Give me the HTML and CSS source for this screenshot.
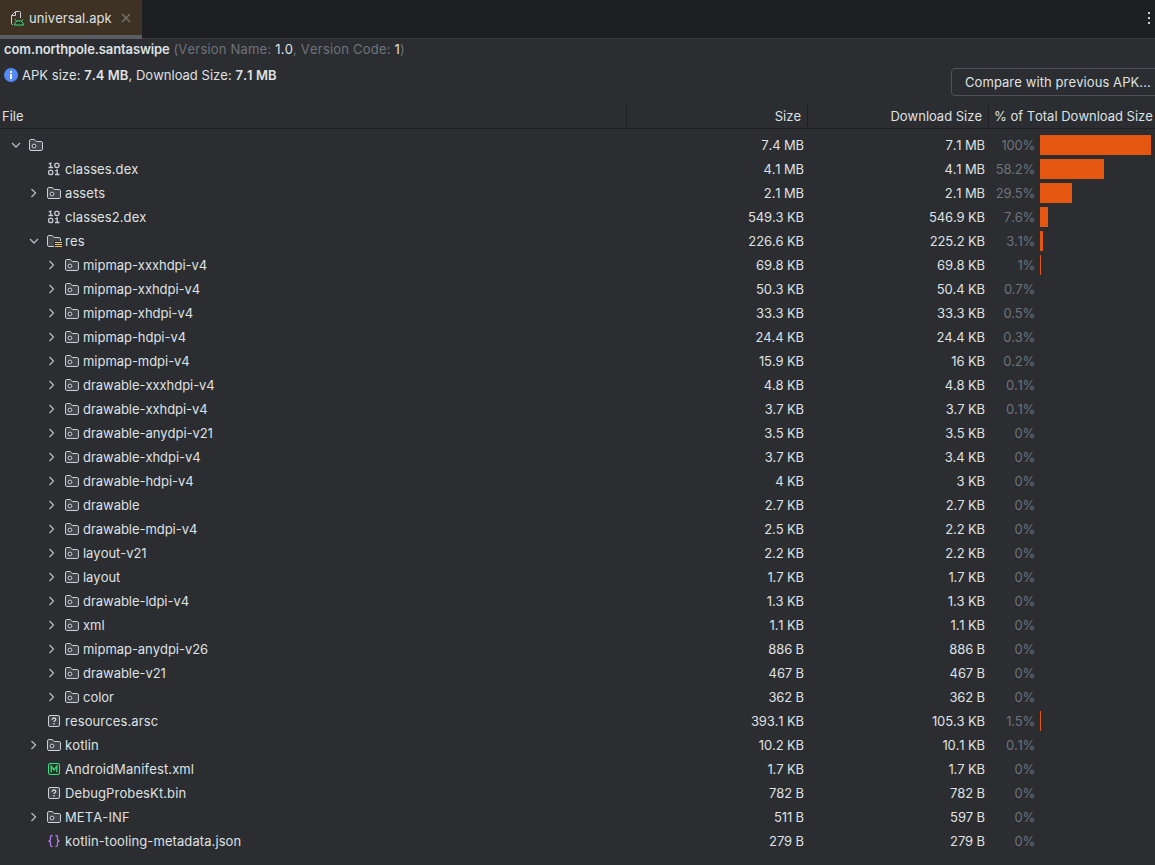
FILE: index.html
```
<!DOCTYPE html>
<html lang="en">
<head>
<meta charset="utf-8">
<title>universal.apk</title>
<link rel="stylesheet" href="styles.css">
</head>
<body>
<svg class="defs" aria-hidden="true">
  <symbol id="down" viewBox="0 0 16 16"><path d="M4 6l4 4 4-4" fill="none" stroke="#b4b8bf" stroke-width="1.3"/></symbol>
  <symbol id="right" viewBox="0 0 16 16"><path d="M5.5 4l4 4-4 4" fill="none" stroke="#b4b8bf" stroke-width="1.3"/></symbol>
  <symbol id="folder" viewBox="0 0 16 16"><path d="M1.5 3.9c0-.8.6-1.4 1.4-1.4h3.2l2.2 2h4.8c.8 0 1.4.6 1.4 1.4v6.2c0 .8-.6 1.4-1.4 1.4H2.900c-.8 0-1.4-.6-1.400-1.400z" fill="#43454a" stroke="#ced0d6"/><circle cx="6" cy="9" r="1.900" fill="#2b2d30" stroke="#ced0d6"/></symbol>
  <symbol id="resfolder" viewBox="0 0 16 16"><path d="M8 13.5H2.9c-.8 0-1.4-.6-1.4-1.4V3.9c0-.8.6-1.4 1.4-1.4h3.2l2.2 2h4.8c.8 0 1.4.6 1.4 1.4V8H8z" fill="#43454a"/><path d="M8 13.5H2.9c-.8 0-1.4-.6-1.4-1.4V3.9c0-.8.6-1.4 1.4-1.4h3.2l2.2 2h4.8c.8 0 1.4.6 1.4 1.4V8" fill="none" stroke="#ced0d6"/><path d="M9 9.5h7M9 11.5h7M9 13.5h7" stroke="#f2c55c"/></symbol>
  <symbol id="binary" viewBox="0 0 16 16"><g fill="none" stroke="#ced0d6" stroke-width="1.300"><path d="M2.700 3l2-1v4.500M2.500 6.500h4.500"/><rect x="8.800" y="2.300" width="4.200" height="4.200" rx="1.600"/><rect x="2.600" y="9.300" width="4.200" height="4.200" rx="1.600"/><path d="M9.200 10l2-1v4.500M9 13.500h4.500"/></g></symbol>
  <symbol id="unknown" viewBox="0 0 16 16"><rect x="2.5" y="2.5" width="11" height="11" rx="1.5" fill="#43454a" stroke="#ced0d6"/><path d="M6.2 6.7c0-1 .8-1.7 1.8-1.7s1.8.6 1.8 1.6c0 1.2-1.8 1.2-1.8 2.400M8 10v1.400" fill="none" stroke="#ced0d6" stroke-width="1.3"/></symbol>
  <symbol id="manifest" viewBox="0 0 16 16"><rect x="2.5" y="2.5" width="11" height="11" rx="1.5" fill="#253627" stroke="#3ddc84"/><path d="M5.2 11.3V5.2L8 9l2.8-3.8v6.1" fill="none" stroke="#3ddc84" stroke-width="1.3"/></symbol>
  <symbol id="json" viewBox="0 0 16 16"><path d="M6.5 2.500H6C4.900 2.500 4.500 3.200 4.500 4v2.200c0 1-.5 1.800-2 1.800 1.500 0 2 .8 2 1.800V12c0 .8.4 1.500 1.500 1.500h.5M9.500 2.500h.5c1.100 0 1.500.7 1.500 1.500v2.200c0 1 .5 1.800 2 1.800-1.500 0-2 .8-2 1.800V12c0 .8-.4 1.500-1.500 1.500h-.5" fill="none" stroke="#b07be8" stroke-width="1.3"/></symbol>
</svg>

<header class="tabs">
  <div class="tab">
    <svg class="icon" viewBox="0 0 16 16"><path d="M4 14.500H3.500c-.6 0-1-.4-1-1V5.500l4-4h4c.6 0 1 .4 1 1V8M6.500 1.500v4h-4" fill="none" stroke="#ced0d6"/><path d="M5.500 15c.2-2.600 2-4.300 4.500-4.300s4.300 1.700 4.500 4.300zM6 9.200l1.700 2.200M14 9.200l-1.700 2.200" fill="#253627" stroke="#3ddc84"/></svg>
    <span class="tab-name">universal.apk</span>
    <svg class="close" viewBox="0 0 16 16"><path d="M4 4l8 8M12 4l-8 8" stroke="#7a7670" stroke-width="1.2"/></svg>
  </div>
  <svg class="more" viewBox="0 0 4 14"><path d="M1 1h2v2H1zM1 6h2v2H1zM1 11h2v2H1z" fill="#ced0d6"/></svg>
</header>

<section class="summary">
  <div class="info">
    <p class="package"><b>com.northpole.santaswipe</b> <span class="muted">(Version Name: <i>1.0</i>, Version Code: <i>1</i>)</span></p>
    <p class="sizes"><svg class="info-icon" viewBox="0 0 14 14"><circle cx="7" cy="7" r="7" fill="#548af7"/><path d="M6 3h2v2H6zM6 6h2v5H6z" fill="#fff"/></svg><span>APK size: <b>7.4 MB</b>, Download Size: <b>7.1 MB</b></span></p>
  </div>
  <button class="compare">Compare with previous APK...</button>
</section>

<main class="table">
  <div class="row head"><div>File</div><div>Size</div><div>Download Size</div><div>% of Total Download Size</div></div>
  <div class="body">
  <div class="row"><div class="name"><svg><use href="#down"/></svg><svg><use href="#folder"/></svg></div><div>7.4 MB</div><div>7.1 MB</div><div class="pct">100%</div><i class="bar" style="width:111px"></i></div>
  <div class="row"><div class="name l1 leaf"><svg><use href="#binary"/></svg>classes.dex</div><div>4.1 MB</div><div>4.1 MB</div><div class="pct">58.2%</div><i class="bar" style="width:64px"></i></div>
  <div class="row"><div class="name l1"><svg><use href="#right"/></svg><svg><use href="#folder"/></svg>assets</div><div>2.1 MB</div><div>2.1 MB</div><div class="pct">29.5%</div><i class="bar" style="width:32px"></i></div>
  <div class="row"><div class="name l1 leaf"><svg><use href="#binary"/></svg>classes2.dex</div><div>549.3 KB</div><div>546.9 KB</div><div class="pct">7.6%</div><i class="bar" style="width:8px"></i></div>
  <div class="row"><div class="name l1"><svg><use href="#down"/></svg><svg><use href="#resfolder"/></svg>res</div><div>226.6 KB</div><div>225.2 KB</div><div class="pct">3.1%</div><i class="bar" style="width:3px"></i></div>
  <div class="row"><div class="name l2"><svg><use href="#right"/></svg><svg><use href="#folder"/></svg>mipmap-xxxhdpi-v4</div><div>69.8 KB</div><div>69.8 KB</div><div class="pct">1%</div><i class="bar" style="width:1px"></i></div>
  <div class="row"><div class="name l2"><svg><use href="#right"/></svg><svg><use href="#folder"/></svg>mipmap-xxhdpi-v4</div><div>50.3 KB</div><div>50.4 KB</div><div class="pct">0.7%</div></div>
  <div class="row"><div class="name l2"><svg><use href="#right"/></svg><svg><use href="#folder"/></svg>mipmap-xhdpi-v4</div><div>33.3 KB</div><div>33.3 KB</div><div class="pct">0.5%</div></div>
  <div class="row"><div class="name l2"><svg><use href="#right"/></svg><svg><use href="#folder"/></svg>mipmap-hdpi-v4</div><div>24.4 KB</div><div>24.4 KB</div><div class="pct">0.3%</div></div>
  <div class="row"><div class="name l2"><svg><use href="#right"/></svg><svg><use href="#folder"/></svg>mipmap-mdpi-v4</div><div>15.9 KB</div><div>16 KB</div><div class="pct">0.2%</div></div>
  <div class="row"><div class="name l2"><svg><use href="#right"/></svg><svg><use href="#folder"/></svg>drawable-xxxhdpi-v4</div><div>4.8 KB</div><div>4.8 KB</div><div class="pct">0.1%</div></div>
  <div class="row"><div class="name l2"><svg><use href="#right"/></svg><svg><use href="#folder"/></svg>drawable-xxhdpi-v4</div><div>3.7 KB</div><div>3.7 KB</div><div class="pct">0.1%</div></div>
  <div class="row"><div class="name l2"><svg><use href="#right"/></svg><svg><use href="#folder"/></svg>drawable-anydpi-v21</div><div>3.5 KB</div><div>3.5 KB</div><div class="pct">0%</div></div>
  <div class="row"><div class="name l2"><svg><use href="#right"/></svg><svg><use href="#folder"/></svg>drawable-xhdpi-v4</div><div>3.7 KB</div><div>3.4 KB</div><div class="pct">0%</div></div>
  <div class="row"><div class="name l2"><svg><use href="#right"/></svg><svg><use href="#folder"/></svg>drawable-hdpi-v4</div><div>4 KB</div><div>3 KB</div><div class="pct">0%</div></div>
  <div class="row"><div class="name l2"><svg><use href="#right"/></svg><svg><use href="#folder"/></svg>drawable</div><div>2.7 KB</div><div>2.7 KB</div><div class="pct">0%</div></div>
  <div class="row"><div class="name l2"><svg><use href="#right"/></svg><svg><use href="#folder"/></svg>drawable-mdpi-v4</div><div>2.5 KB</div><div>2.2 KB</div><div class="pct">0%</div></div>
  <div class="row"><div class="name l2"><svg><use href="#right"/></svg><svg><use href="#folder"/></svg>layout-v21</div><div>2.2 KB</div><div>2.2 KB</div><div class="pct">0%</div></div>
  <div class="row"><div class="name l2"><svg><use href="#right"/></svg><svg><use href="#folder"/></svg>layout</div><div>1.7 KB</div><div>1.7 KB</div><div class="pct">0%</div></div>
  <div class="row"><div class="name l2"><svg><use href="#right"/></svg><svg><use href="#folder"/></svg>drawable-ldpi-v4</div><div>1.3 KB</div><div>1.3 KB</div><div class="pct">0%</div></div>
  <div class="row"><div class="name l2"><svg><use href="#right"/></svg><svg><use href="#folder"/></svg>xml</div><div>1.1 KB</div><div>1.1 KB</div><div class="pct">0%</div></div>
  <div class="row"><div class="name l2"><svg><use href="#right"/></svg><svg><use href="#folder"/></svg>mipmap-anydpi-v26</div><div>886 B</div><div>886 B</div><div class="pct">0%</div></div>
  <div class="row"><div class="name l2"><svg><use href="#right"/></svg><svg><use href="#folder"/></svg>drawable-v21</div><div>467 B</div><div>467 B</div><div class="pct">0%</div></div>
  <div class="row"><div class="name l2"><svg><use href="#right"/></svg><svg><use href="#folder"/></svg>color</div><div>362 B</div><div>362 B</div><div class="pct">0%</div></div>
  <div class="row"><div class="name l1 leaf"><svg><use href="#unknown"/></svg>resources.arsc</div><div>393.1 KB</div><div>105.3 KB</div><div class="pct">1.5%</div><i class="bar" style="width:1px"></i></div>
  <div class="row"><div class="name l1"><svg><use href="#right"/></svg><svg><use href="#folder"/></svg>kotlin</div><div>10.2 KB</div><div>10.1 KB</div><div class="pct">0.1%</div></div>
  <div class="row"><div class="name l1 leaf"><svg><use href="#manifest"/></svg>AndroidManifest.xml</div><div>1.7 KB</div><div>1.7 KB</div><div class="pct">0%</div></div>
  <div class="row"><div class="name l1 leaf"><svg><use href="#unknown"/></svg>DebugProbesKt.bin</div><div>782 B</div><div>782 B</div><div class="pct">0%</div></div>
  <div class="row"><div class="name l1"><svg><use href="#right"/></svg><svg><use href="#folder"/></svg>META-INF</div><div>511 B</div><div>597 B</div><div class="pct">0%</div></div>
  <div class="row"><div class="name l1 leaf"><svg><use href="#json"/></svg>kotlin-tooling-metadata.json</div><div>279 B</div><div>279 B</div><div class="pct">0%</div></div>
  </div>
</main>
</body>
</html>
```
FILE: styles.css
```
* { box-sizing: border-box; }
body { margin: 0; width: 1155px; height: 865px; overflow: hidden; background: #2b2d30; color: #dfe1e5; font: 13px/16px Inter, sans-serif; font-kerning: none; letter-spacing: 0.08px; white-space: nowrap; }
p { margin: 0; }
b { font-weight: 600; }
i { font-style: normal; }
.defs { position: absolute; width: 0; height: 0; }

.tabs { display: flex; justify-content: space-between; height: 39px; background: #1e1f22; border-bottom: 1px solid #393b40; }
.tab { display: flex; align-items: center; width: 142px; height: 39px; padding-left: 9px; background: #3d3223; border-bottom: 4px solid #5a5d63; }
.icon { width: 16px; height: 16px; margin: 1px 4px 0 0; }
.tab-name { width: 89px; }
.close { width: 16px; height: 16px; }
.more { width: 4px; height: 14px; margin: 11px 4px 0 0; }

.summary { display: flex; justify-content: space-between; height: 65px; }
.info { padding: 2px 0 0 4px; }
.muted { color: #6f737a; letter-spacing: 0.2px; }
.muted i { color: #dfe1e5; }
.sizes { display: flex; align-items: center; gap: 4px; margin-top: 10px; letter-spacing: 0.03px; }
.package b { letter-spacing: -0.1px; }
.info-icon { width: 14px; height: 14px; }
.compare { width: 210px; height: 28px; margin: 29px -6px 0 0; padding: 0 0 0 13px; background: none; border: 1px solid #4e5157; border-radius: 4px; color: inherit; font: inherit; font-kerning: none; letter-spacing: inherit; text-align: left; }

.row { display: grid; grid-template-columns: 626px 178px 181px 50px 120px; align-items: center; height: 24px; text-align: right; letter-spacing: -0.12px; }
.head { grid-template-columns: 627px 181px 181px 166px; height: 25px; border-bottom: 1px solid #1e1f22; letter-spacing: 0; }
.head > div { height: 22px; padding: 3px 6px 0 0; border-right: 1px solid #1e1f22; }
.head > div:first-child { padding-left: 2px; text-align: left; }
.head > div:last-child { padding: 3px 0 0 5px; border: 0; text-align: left; }
.body { padding-top: 4px; }
.name { display: flex; align-items: center; padding-left: 8px; letter-spacing: 0.1px; }
.name svg { flex: none; width: 16px; height: 16px; margin-right: 3px; }
.name svg + svg { margin-left: 1px; }
.l1 { padding-left: 26px; }
.l1.leaf { padding-left: 46px; }
.l2 { padding-left: 44px; letter-spacing: -0.04px; }
.pct { color: #6f737a; letter-spacing: -0.25px; }
.bar { height: 20px; margin-left: 5px; background: #e55610; }
```
